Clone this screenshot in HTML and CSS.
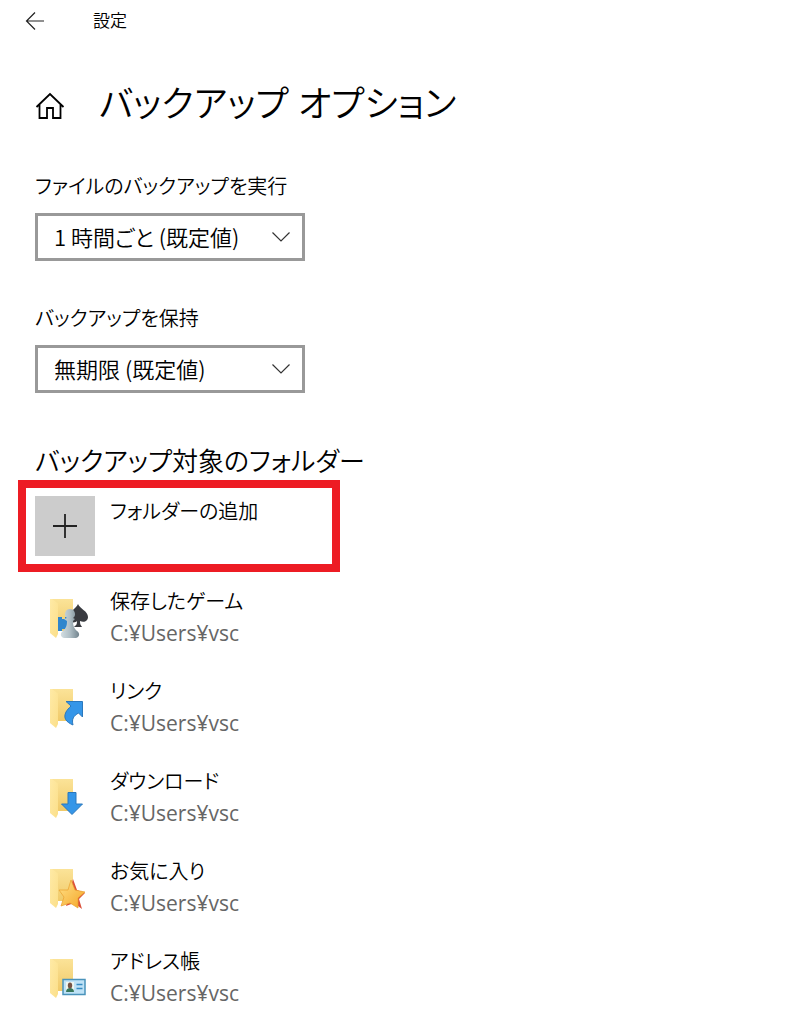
FILE: index.html
```html
<!DOCTYPE html>
<html lang="ja">
<head>
<meta charset="utf-8">
<meta name="viewport" content="width=device-width, initial-scale=1">
<title>設定</title>
<link rel="stylesheet" href="styles.css">
</head>
<body>
<header class="titlebar">
  <button class="back" type="button" aria-label="戻る">
    <svg width="20" height="20" viewBox="0 0 20 20" fill="none" stroke="#222" stroke-width="1.2"><path d="M19 10H1.5M10 1.5 1.5 10l8.500 8.500"/></svg>
  </button>
  <span class="app-name">設定</span>
</header>
<main class="page">
  <div class="page-title">
    <button class="home" type="button" aria-label="ホーム">
      <svg width="30" height="30" viewBox="0 0 30 30" fill="none" stroke="#000" stroke-width="1.8"><path d="M1.500 16 15 3l13.500 13M4.500 13.500V27H12V17h6v10h7.500V13.500"/></svg>
    </button>
    <h1>バックアップ オプション</h1>
  </div>

  <div class="field">
    <label for="interval">ファイルのバックアップを実行</label>
    <div class="select-box">
      <select id="interval"><option>1 時間ごと (既定値)</option></select>
      <svg class="chevron" width="20" height="12" viewBox="0 0 20 12" fill="none" stroke="#333" stroke-width="1.2"><path d="m1.500 1.500 8.500 8.500 8.500-8.500"/></svg>
    </div>
  </div>
  <div class="field">
    <label for="retention">バックアップを保持</label>
    <div class="select-box">
      <select id="retention"><option>無期限 (既定値)</option></select>
      <svg class="chevron" width="20" height="12" viewBox="0 0 20 12" fill="none" stroke="#333" stroke-width="1.2"><path d="m1.500 1.500 8.500 8.500 8.500-8.500"/></svg>
    </div>
  </div>

  <h2>バックアップ対象のフォルダー</h2>
  <div class="highlight">
    <button class="row add" type="button">
      <span class="tile"><svg width="24" height="24" viewBox="0 0 24 24" stroke="#222" stroke-width="1.800"><path d="M0 12h24M12 0v24"/></svg></span>
      <span class="name">フォルダーの追加</span>
    </button>
  </div>

  <svg class="defs" width="0" height="0" aria-hidden="true">
    <defs>
      <linearGradient id="flap" x1="0" y1="0" x2="1" y2="1"><stop offset="0" stop-color="#ffeaa6"/><stop offset="1" stop-color="#fbdf8a"/></linearGradient>
      <linearGradient id="back" x1="0" y1="0" x2="0" y2="1"><stop offset="0" stop-color="#fbe398"/><stop offset="1" stop-color="#f0ca69"/></linearGradient>
      <linearGradient id="pawn" x1="0" y1="0" x2="1" y2="0"><stop offset="0" stop-color="#d3dee2"/><stop offset=".5" stop-color="#afbec5"/><stop offset="1" stop-color="#72848e"/></linearGradient>
      <linearGradient id="gold" x1="0" y1="0" x2="1" y2="1"><stop offset="0" stop-color="#ffe28a"/><stop offset="1" stop-color="#f5a525"/></linearGradient>
      <g id="folder">
        <path d="M16 14h22v32H18z" fill="url(#back)"/>
        <path d="M15 14h2l6 4.500V49l-2 4-6-5z" fill="url(#flap)"/>
      </g>
    </defs>
  </svg>

  <ul class="folders">
    <li class="row">
      <svg class="icon" viewBox="0 0 60 60"><use href="#folder" y="-1"/><path d="M23 31h4v2h3v-2h4v14h-4v-2h-3v2h-4z" fill="#2f86cd"/><path d="M43 18c-2 5-9 7-9 13 0 5 5 7 8 4 0 4-1 4-3 6h8c-1-2-2-2-2-6 4 2 8 0 8-4 0-6-8-8-10-13z" fill="#393b40"/><path d="M35 23a5 5 0 0 1 3 9l2 1-2 2c0 5 1 7 4 10 3 2 3 6-1 7H29c-4-1-4-5-1-7 3-3 4-5 4-10l-3-2 3-1a5 5 0 0 1 3-9z" fill="url(#pawn)"/></svg>
      <div><div class="name">保存したゲーム</div><div class="path">C:¥Users¥vsc</div></div>
    </li>
    <li class="row">
      <svg class="icon" viewBox="0 0 60 60"><use href="#folder" y="-1"/><path d="M31 25.500h16.500V41l-4-4c-5 3-7 6-5.500 12-7-3-10-7-7-13 1-2 3-4 5-6z" fill="#3596e8" stroke="#2b78bd"/></svg>
      <div><div class="name">リンク</div><div class="path">C:¥Users¥vsc</div></div>
    </li>
    <li class="row">
      <svg class="icon" viewBox="0 0 60 60"><use href="#folder" y="-1"/><path d="M33 26.500h8V38h6.500L37 48.500 26.500 38H33z" fill="#3596e8" stroke="#2b78bd"/></svg>
      <div><div class="name">ダウンロード</div><div class="path">C:¥Users¥vsc</div></div>
    </li>
    <li class="row">
      <svg class="icon" viewBox="0 0 60 60"><use href="#folder" y="-1"/><path d="m38 23 4 11 8 3-6 6 3 10-8-6-8 3z" fill="#db503a"/><path d="m36 24 4 10 10 2-7 6v10l-8-5-9 3 3-9-5-7h9z" fill="url(#gold)" stroke="#eaa02d" stroke-width=".7"/></svg>
      <div><div class="name">お気に入り</div><div class="path">C:¥Users¥vsc</div></div>
    </li>
    <li class="row">
      <svg class="icon" viewBox="0 0 60 60"><use href="#folder" y="-1"/><path d="M28 33.500h22v15H28z" fill="#bfe2f6" stroke="#4a93bb" stroke-width="1.500"/><path d="M31 36h8v10h-8z" fill="#eff6ef"/><path d="M31 46c0-3 2-4 4-4s4 1 4 4z" fill="#36785d"/><ellipse cx="35" cy="39.500" rx="2.200" ry="3" fill="#765344"/><path d="M41.500 38.500h6M41.500 42.500h6" stroke="#368bc2" stroke-width="1.600"/></svg>
      <div><div class="name">アドレス帳</div><div class="path">C:¥Users¥vsc</div></div>
    </li>
  </ul>
</main>
</body>
</html>
```
FILE: styles.css
```css
* { box-sizing: border-box; }
body {
  margin: 0;
  background: #fff;
  color: #000;
  font: 350 20px/30px "Open Sans", "Noto Sans CJK JP", sans-serif;
  font-feature-settings: "palt";
}
button, select { font: inherit; font-feature-settings: inherit; color: inherit; }
button { border: 0; padding: 0; background: none; text-align: left; }
svg { display: block; }
h1, h2 { margin: 0; font-weight: 350; }
.titlebar { display: flex; align-items: center; gap: 48px; height: 42px; padding-left: 25px; }
.app-name { font-size: 17px; }
.page { padding: 32px 35px 0; }
.page-title { display: flex; align-items: center; gap: 34px; margin-bottom: 38px; }
.page-title h1 { font-size: 36px; line-height: 60px; }
.home { padding-top: 3px; }
.field { margin-bottom: 43px; }
.field label { display: block; margin-bottom: 11px; }
.select-box { display: grid; align-items: center; width: 270px; max-width: 100%; }
.select-box > * { grid-area: 1 / 1; }
.select-box select {
  width: 100%;
  height: 48px;
  padding: 0 48px 2px 16px;
  border: 3px solid #999;
  border-radius: 0;
  background: #fff;
  font-family: "Noto Sans CJK JP", sans-serif;
  font-size: 22px;
  appearance: none;
}
.chevron { justify-self: end; margin-right: 14px; pointer-events: none; }
h2 { padding-top: 7px; font-size: 26px; line-height: 36px; }
.highlight { width: 322px; max-width: 100%; margin: 1px 0 14px -17px; padding: 8px 9px; border: 8px solid #ed1c24; }
.row { display: flex; align-items: flex-start; gap: 15px; height: 60px; }
.add { width: 100%; }
.tile { display: grid; place-items: center; width: 60px; height: 60px; background: #ccc; }
.name { line-height: 32px; }
.defs { position: absolute; }
.folders { display: grid; gap: 30px; margin: 0; padding: 0; list-style: none; }
.icon { flex: none; width: 60px; height: 60px; }
.path { color: #666; font-size: 21px; font-weight: 400; }
```
